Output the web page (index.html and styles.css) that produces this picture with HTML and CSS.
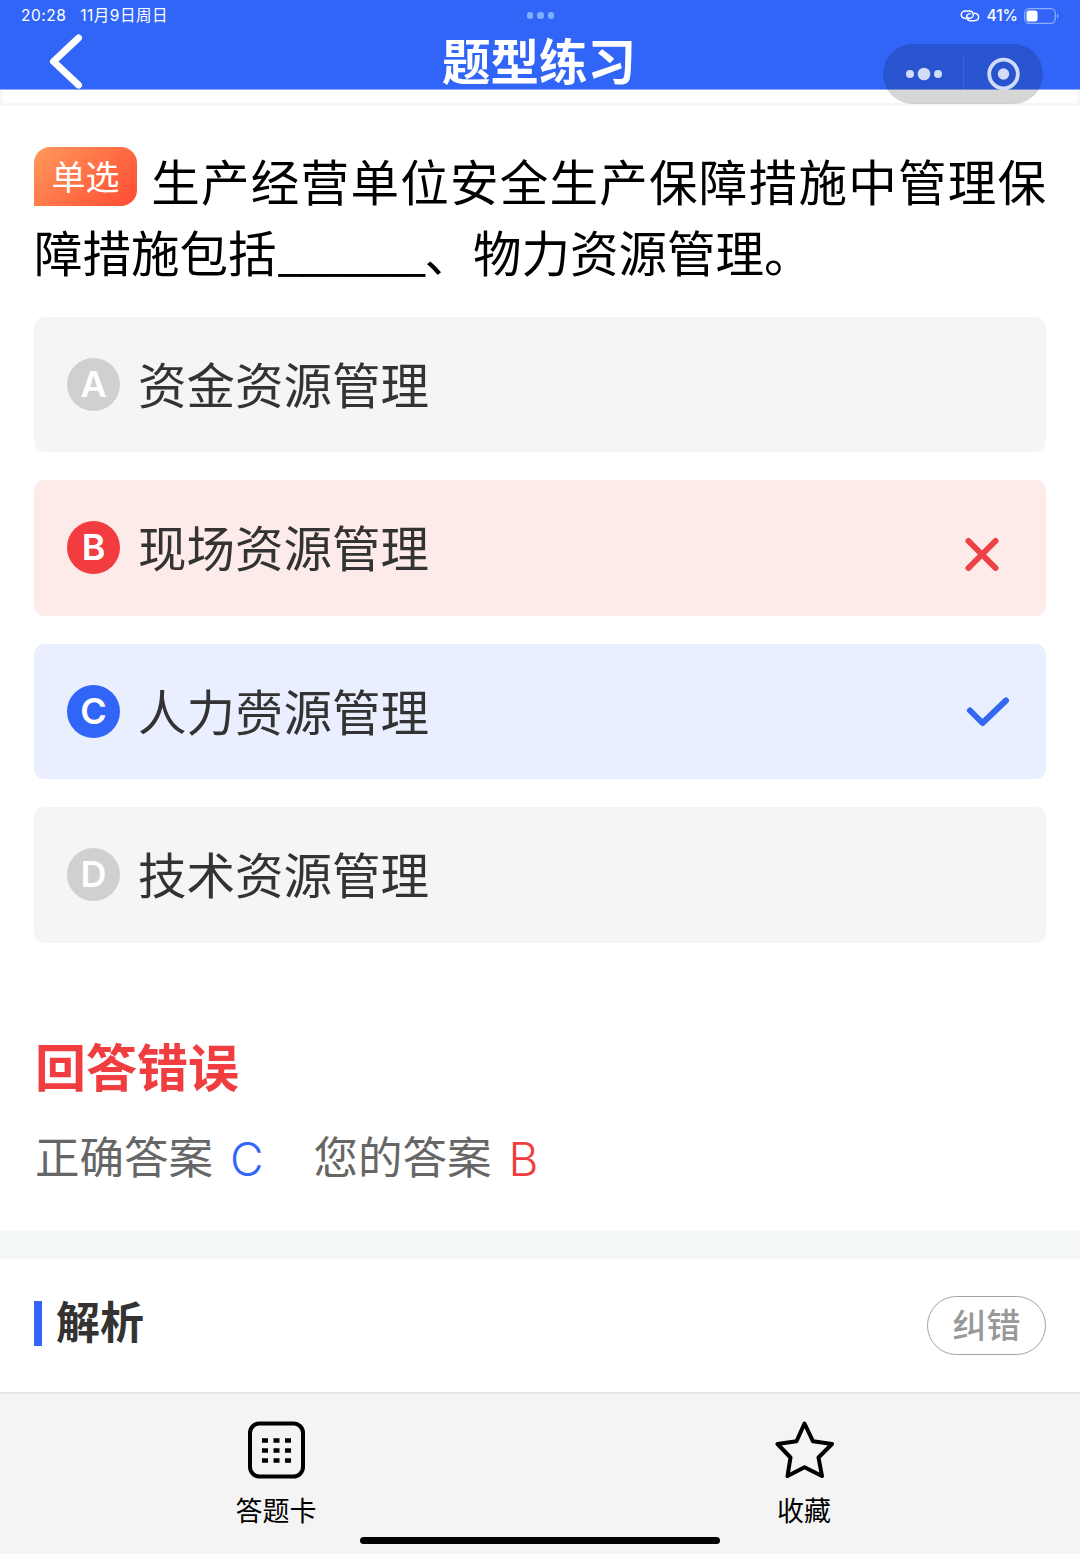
FILE: index.html
```html
<!DOCTYPE html>
<html lang="zh-CN">
  <head>
    <meta charset="UTF-8" />
    <meta name="viewport" content="width=device-width, initial-scale=1.0" />
    <title>题型练习</title>
    <link rel="stylesheet" href="styles.css">
  </head>
  <body>
    <header class="header">
      <div class="status-bar">
        <div class="status-left">
          <span>20:28</span>
          <span class="date">11月9日周日</span>
        </div>
        <div class="status-dots"><i></i><i></i><i></i></div>
        <div class="status-right">
          <svg class="link-icon" width="20" height="14" viewBox="0 0 20 14" fill="none" stroke="#fff" stroke-width="1.4" stroke-linecap="round">
            <path d="M5.500 9.500C2.800 9.300 1.200 7.600 1.200 5.600C1.200 3.400 3 2 5.500 2H9C11.500 2 13.200 3.600 13.200 5.700C13.200 7.700 11.500 9.300 9.500 9.300C8.600 9.300 8 8.900 7.600 8.300" />
            <path d="M14.300 4.300C17 4.500 18.600 6.100 18.600 8.100C18.600 10.300 16.800 11.700 14.300 11.700H10.800C8.300 11.700 6.600 10.100 6.600 8C6.600 6 8.300 4.600 10.300 4.600" />
          </svg>
          <span class="percent">41%</span>
          <svg class="battery" width="36" height="16" viewBox="0 0 36 16">
            <rect x="0.700" y="0.700" width="30.600" height="14.600" rx="4.500" fill="none" stroke="#8fabfa" stroke-width="1.300" />
            <rect x="2.500" y="2.500" width="11" height="11" rx="2.500" fill="#fff" />
            <path d="M33 5.500c2 1 2 4 0 5z" fill="#8fabfa" />
          </svg>
        </div>
      </div>
      <div class="nav-bar">
        <svg class="back" width="36" height="56" viewBox="0 0 36 56" fill="none" stroke="#fff" stroke-width="7" stroke-linecap="round" stroke-linejoin="round">
          <path d="M31.500 5L6.500 28.500L31.500 52" />
        </svg>
        <h1>题型练习</h1>
      </div>
      <div class="capsule">
        <svg width="160" height="60" viewBox="0 0 160 60">
          <g fill="#d2dcf9">
            <circle cx="27" cy="30" r="4" />
            <circle cx="41" cy="30" r="6.300" />
            <circle cx="55" cy="30" r="4" />
            <circle cx="120.500" cy="30" r="5.700" />
          </g>
          <circle cx="120.500" cy="30" r="14.300" fill="none" stroke="#d2dcf9" stroke-width="3.800" />
          <path d="M80.500 12V48" stroke="#fff" stroke-opacity="0.1" />
        </svg>
      </div>
    </header>

    <div class="strip"></div>

    <main>
      <section class="question">
        <p class="stem"><span class="tag">单选</span>生产经营单位安全生产保障措施中管理保障措施包括<span class="blank">______</span>、物力资源管理。</p>

        <ul class="options">
          <li class="option">
            <span class="letter">A</span>
            <span class="text">资金资源管理</span>
          </li>
          <li class="option wrong">
            <span class="letter">B</span>
            <span class="text">现场资源管理</span>
            <svg class="mark" width="48" height="48" viewBox="0 0 48 48">
              <path d="M9.500 17L36.500 44M36.500 17L9.500 44" />
            </svg>
          </li>
          <li class="option right">
            <span class="letter">C</span>
            <span class="text">人力赍源管理</span>
            <svg class="mark" width="48" height="48" viewBox="0 0 48 48">
              <path d="M11 23.500L23.500 36L47 13.500" />
            </svg>
          </li>
          <li class="option">
            <span class="letter">D</span>
            <span class="text">技术资源管理</span>
          </li>
        </ul>
      </section>

      <section class="result">
        <h2>回答错误</h2>
        <div class="answers">
          <span class="answer">正确答案 <b class="blue">C</b></span>
          <span class="answer">您的答案 <b class="red">B</b></span>
        </div>
      </section>

      <section class="analysis">
        <h3>解析</h3>
        <button type="button">纠错</button>
      </section>
    </main>

    <footer class="tab-bar">
      <a class="tab">
        <svg width="60" height="60" viewBox="0 0 60 60">
          <rect x="4" y="3.500" width="53" height="53" rx="9.500" fill="none" stroke="#000" stroke-width="4" />
          <path d="M16 20.500h29M16 30.500h29M16 40.500h29" stroke="#000" stroke-width="4.500" stroke-dasharray="6 5.500" />
        </svg>
        <span>答题卡</span>
      </a>
      <a class="tab">
        <svg width="60" height="60" viewBox="0 0 60 60">
          <path d="M30.500 3.500L39 21.300L58 24L44.500 37.500L48 56L30.500 47.300L13.500 56L16.500 37.500L3.500 24L22.500 21.300Z" fill="none" stroke="#000" stroke-width="4" stroke-linejoin="round" />
        </svg>
        <span>收藏</span>
      </a>
      <div class="home-indicator"></div>
    </footer>
  </body>
</html>
```

FILE: styles.css
```css
* {
  box-sizing: border-box;
  margin: 0;
  padding: 0;
}
body {
  display: flex;
  flex-direction: column;
  height: 1554px;
  overflow: hidden;
  background-color: #fff;
  font-family: "Noto Sans CJK SC", sans-serif;
  color: #333;
}
.header {
  position: relative;
  height: 90px;
  background-color: #3165f7;
  border-bottom: 1px solid #8ba8fa;
  color: #fff;
}
.status-bar {
  display: grid;
  grid-template-columns: 1fr auto 1fr;
  align-items: center;
  height: 31px;
  padding: 0 20px 0 21px;
  font-family: Inter, "Noto Sans CJK SC", sans-serif;
  font-size: 15.5px;
  line-height: 31px;
}
.status-left {
  display: flex;
  gap: 14px;
  letter-spacing: 0.5px;
}
.status-dots {
  display: flex;
  gap: 4px;
}
.status-dots i {
  width: 6.5px;
  height: 6.5px;
  border-radius: 50%;
  background-color: #7fb0ff;
}
.status-right {
  display: flex;
  justify-content: flex-end;
  align-items: center;
}
.percent {
  margin: 0 6px;
  font-weight: 500;
}
.nav-bar {
  display: grid;
  grid-template-columns: 100px 1fr 100px;
  height: 58px;
}
.back {
  margin: 2px 0 0 47px;
}
.nav-bar h1 {
  font-size: 48.5px;
  font-weight: 700;
  line-height: 58px;
  text-align: center;
  margin: -1px 2px 0 0;
}
.capsule {
  position: absolute;
  top: 44px;
  right: 37px;
  width: 160px;
  height: 60px;
  border-radius: 30px;
  background-color: rgba(0, 0, 0, 0.16);
}
.strip {
  height: 16px;
  border: 3px solid #f6f6f6;
  border-top: none;
}
.question {
  padding: 39px 34px 0;
}
.stem {
  font-size: 48.5px;
  line-height: 71px;
  height: 171.5px;
  text-align: justify;
  color: #000;
}
.tag {
  display: inline-block;
  width: 103px;
  height: 59px;
  margin-right: 13px;
  border-radius: 16px 16px 16px 0;
  background: linear-gradient(135deg, #ff9a5a, #ff4a33);
  color: #fff;
  font-size: 34px;
  line-height: 57px;
  text-align: center;
  vertical-align: 11px;
}
.blank {
  margin: 0 1px;
  letter-spacing: -2.8px;
  vertical-align: 2px;
  line-height: 1;
}
.options {
  display: flex;
  flex-direction: column;
  gap: 28px;
  list-style: none;
}
.option {
  display: flex;
  align-items: center;
  height: 135.5px;
  padding: 0 33px;
  border-radius: 10px;
  background-color: #f5f5f5;
}
.letter {
  width: 53px;
  height: 53px;
  border-radius: 50%;
  background-color: #d1d0d1;
  color: #fff;
  font-family: Inter, sans-serif;
  font-size: 36px;
  font-weight: 600;
  line-height: 53px;
  text-align: center;
}
.text {
  margin: -3px 0 0 18px;
  font-size: 48.5px;
  line-height: 72px;
}
.mark {
  margin-left: auto;
  margin-right: 6px;
  overflow: visible;
  fill: none;
  stroke-width: 6;
  stroke-linecap: round;
  stroke-linejoin: round;
}
.wrong {
  background-color: #fdebea;
}
.wrong .letter {
  background-color: #f33c3f;
}
.wrong .mark {
  stroke: #ec4246;
}
.right {
  background-color: #e9effe;
}
.right .letter {
  background-color: #3165f7;
}
.right .mark {
  stroke: #3467f2;
}
.result {
  height: 288.5px;
  padding: 85px 34px 0 35px;
}
.result h2 {
  font-size: 51px;
  font-weight: 700;
  line-height: 74px;
  color: #f03e40;
}
.answers {
  display: flex;
  gap: 50px;
  margin-top: 20px;
  font-size: 44.5px;
  line-height: 66px;
  color: #666;
}
.answer {
  display: flex;
  gap: 17px;
}
.answer b {
  font-family: Inter, sans-serif;
  font-size: 46px;
  font-weight: 300;
  padding-top: 4px;
}
.blue {
  color: #3165f7;
}
.red {
  color: #f03e40;
}
.analysis {
  display: flex;
  justify-content: space-between;
  align-items: flex-start;
  height: 161px;
  padding: 37px 34px 0;
  border-top: 28px solid #f3f7f8;
}
.analysis h3 {
  height: 45px;
  margin-top: 5px;
  padding-left: 14px;
  border-left: 8px solid #3165f7;
  font-size: 44px;
  font-weight: 700;
  line-height: 39px;
}
.analysis button {
  width: 119px;
  height: 59px;
  padding-bottom: 3px;
  border: 1.5px solid #a3a3a3;
  border-radius: 30px;
  background-color: #fff;
  color: #999;
  font-family: inherit;
  font-size: 34px;
  font-weight: 500;
  line-height: 50px;
}
.tab-bar {
  position: relative;
  display: flex;
  flex: 1;
  padding: 0 12px;
  border-top: 2px solid #e4e4e4;
  background-color: #f4f4f4;
}
.tab {
  display: flex;
  flex: 1;
  flex-direction: column;
  align-items: center;
  padding-top: 26px;
  font-size: 27px;
  line-height: 40px;
  color: #000;
}
.tab span {
  margin-top: 10px;
}
.home-indicator {
  position: absolute;
  bottom: 10px;
  left: 360px;
  width: 360px;
  height: 7px;
  border-radius: 4px;
  background-color: #000;
}
```
